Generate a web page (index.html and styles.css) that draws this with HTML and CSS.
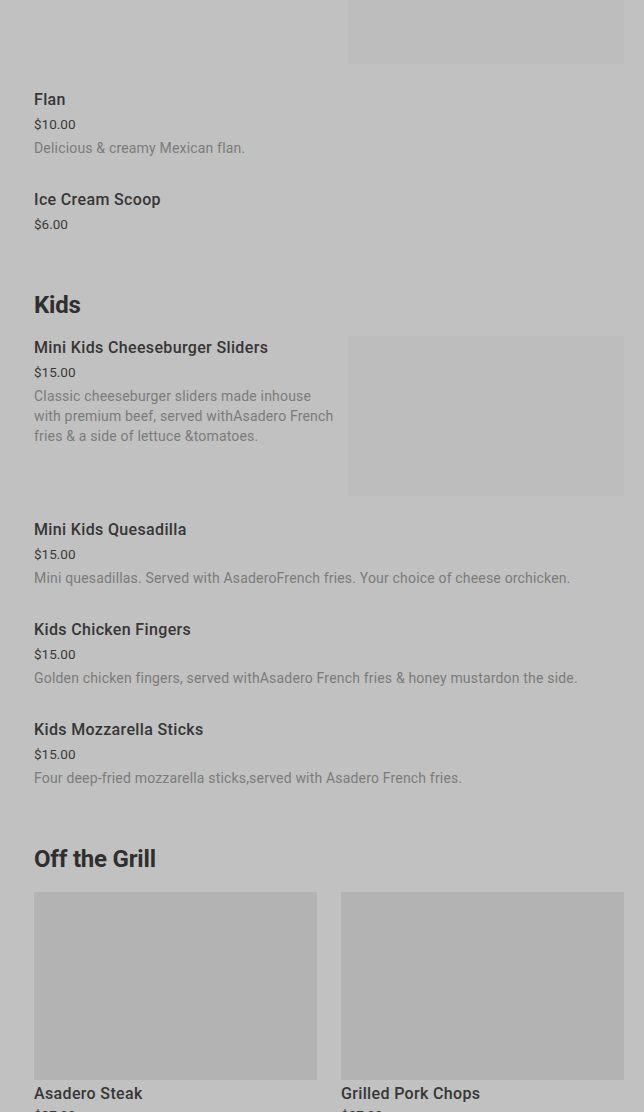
FILE: index.html
```html
<!DOCTYPE html>
<html>
<head>
<meta charset="utf-8">
<link rel="stylesheet" href="styles.css">
</head>
<body>
<main class="menu">
  <div class="item item--scrolled">
    <div class="item-text">
      <div class="item-title">Churros</div>
      <div class="item-price">$10.00</div>
    </div>
    <div class="item-img"></div>
  </div>

  <div class="item">
    <div class="item-text">
      <div class="item-title">Flan</div>
      <div class="item-price">$10.00</div>
      <div class="item-desc">Delicious &amp; creamy Mexican flan.</div>
    </div>
  </div>

  <div class="item">
    <div class="item-text">
      <div class="item-title">Ice Cream Scoop</div>
      <div class="item-price">$6.00</div>
    </div>
  </div>

  <section class="section">
    <h2 class="section-title">Kids</h2>
    <div class="item item--media">
      <div class="item-text">
        <div class="item-title">Mini Kids Cheeseburger Sliders</div>
        <div class="item-price">$15.00</div>
        <div class="item-desc">Classic cheeseburger sliders made inhouse with premium beef, served withAsadero French fries &amp; a side of lettuce &amp;tomatoes.</div>
      </div>
      <div class="item-img"></div>
    </div>
    <div class="item">
      <div class="item-text">
        <div class="item-title">Mini Kids Quesadilla</div>
        <div class="item-price">$15.00</div>
        <div class="item-desc">Mini quesadillas. Served with AsaderoFrench fries. Your choice of cheese orchicken.</div>
      </div>
    </div>
    <div class="item">
      <div class="item-text">
        <div class="item-title">Kids Chicken Fingers</div>
        <div class="item-price">$15.00</div>
        <div class="item-desc">Golden chicken fingers, served withAsadero French fries &amp; honey mustardon the side.</div>
      </div>
    </div>
    <div class="item">
      <div class="item-text">
        <div class="item-title">Kids Mozzarella Sticks</div>
        <div class="item-price">$15.00</div>
        <div class="item-desc">Four deep-fried mozzarella sticks,served with Asadero French fries.</div>
      </div>
    </div>
  </section>

  <section class="section">
    <h2 class="section-title section-title--grid">Off the Grill</h2>
    <div class="grid">
      <div class="card">
        <div class="card-img"></div>
        <div class="item-title">Asadero Steak</div>
        <div class="item-price">$37.00</div>
      </div>
      <div class="card">
        <div class="card-img"></div>
        <div class="item-title">Grilled Pork Chops</div>
        <div class="item-price">$27.00</div>
      </div>
    </div>
  </section>
</main>
</body>
</html>
```

FILE: styles.css
```css
html, body {
  margin: 0;
  padding: 0;
  background: #c1c1c1;
}
body {
  font-family: Roboto, "Liberation Sans", sans-serif;
  color: #333333;
  overflow: hidden;
}
.menu {
  padding: 0 20px 0 34px;
  display: flex;
  flex-direction: column;
}
.item {
  display: flex;
  gap: 12px;
  margin-bottom: 22px;
}
.item--scrolled {
  margin-top: -96px;
  margin-bottom: 25px;
}
.item--scrolled .item-text {
  visibility: hidden;
}
.item--media {
  margin-bottom: 23px;
}
.item--media .item-text {
  padding-top: 1px;
}
.item-text {
  flex: 1;
  min-width: 0;
  display: flex;
  flex-direction: column;
  padding-bottom: 9px;
}
.item-title {
  font-size: 16px;
  line-height: 22px;
  font-weight: 500;
  letter-spacing: 0.35px;
  color: #363636;
}
.item-price {
  margin-top: 3px;
  font-size: 13.5px;
  line-height: 20px;
  color: #3a3a3a;
}
.item-desc {
  margin-top: 4px;
  font-size: 14px;
  line-height: 20px;
  letter-spacing: 0.18px;
  color: #7b7b7b;
}
.item-img {
  width: 276px;
  height: 160px;
  flex-shrink: 0;
  background: #bdbdbd;
}
.section {
  margin-top: 24px;
}
.section-title {
  margin: 0 0 15px;
  font-size: 24px;
  line-height: 32px;
  font-weight: 700;
  letter-spacing: -0.2px;
  color: #2f2f2f;
}
.section-title--grid {
  margin-bottom: 17px;
}
.grid {
  display: grid;
  grid-template-columns: 1fr 1fr;
  gap: 24px;
}
.card {
  display: flex;
  flex-direction: column;
}
.card-img {
  height: 188px;
  background: #b3b3b3;
  margin-bottom: 3px;
}
.card .item-price {
  margin-top: 0;
}
```
